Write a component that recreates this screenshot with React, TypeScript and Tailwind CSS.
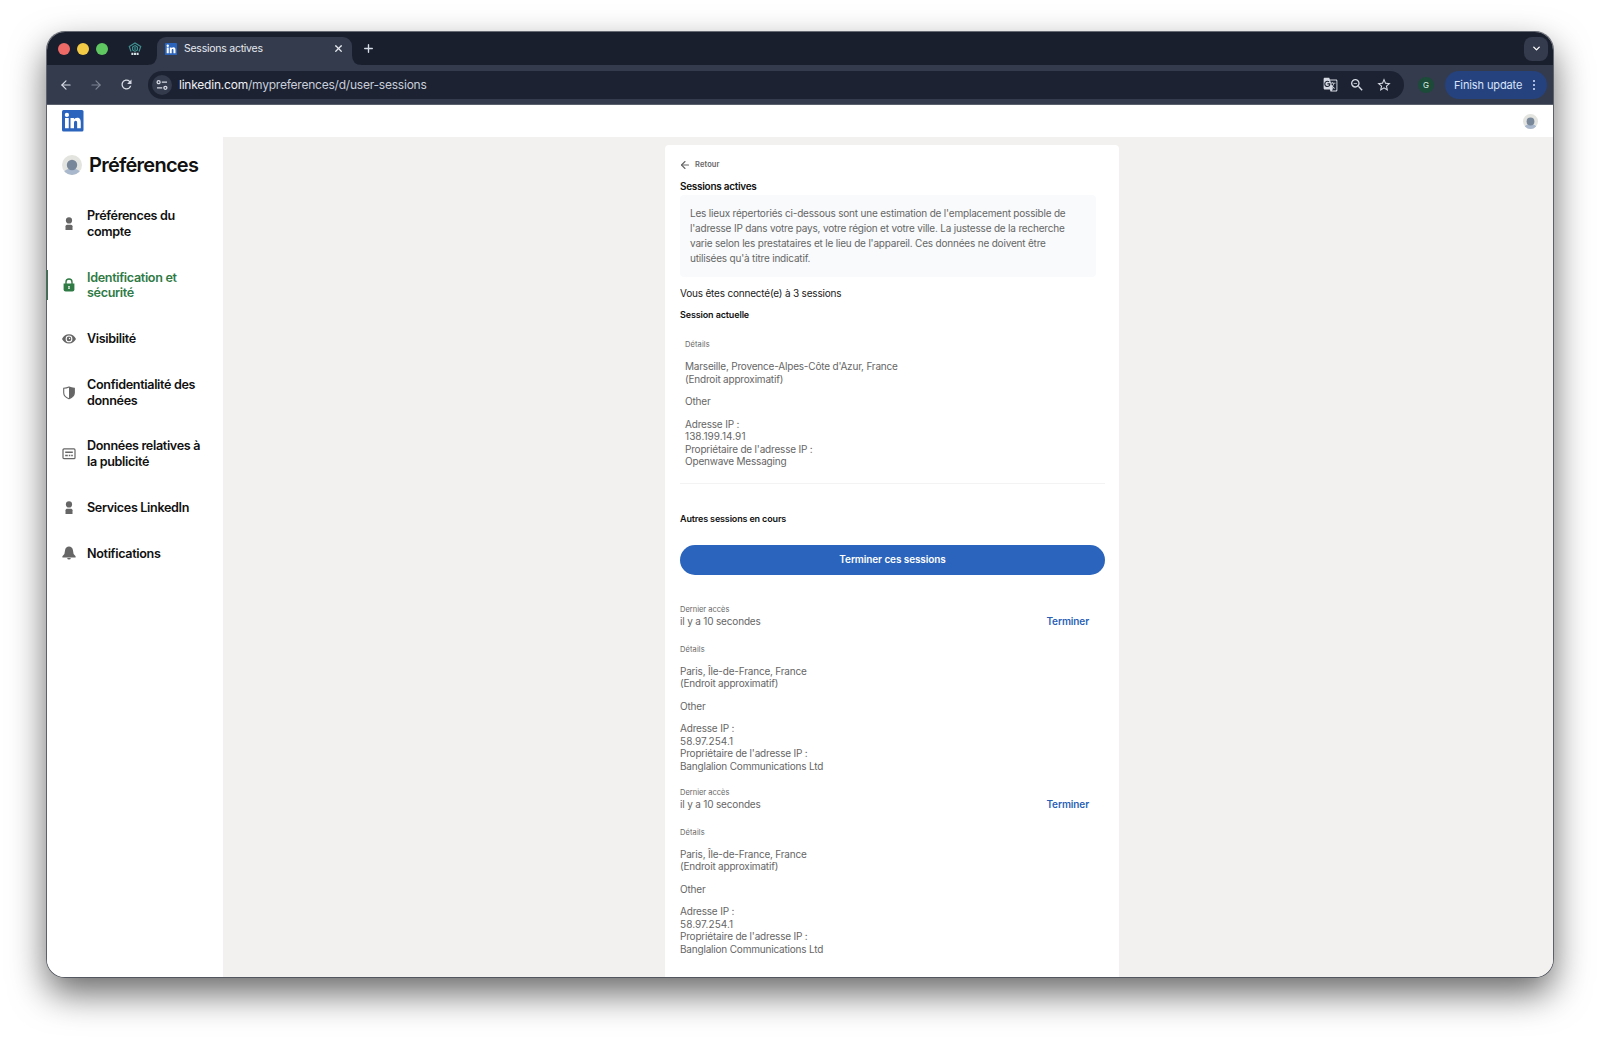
import type { ReactNode } from 'react';
import { ArrowLeft, ArrowRight, ChevronDown, Plus, X } from 'lucide-react';
import { MdGTranslate, MdOutlineStarBorder, MdOutlineZoomOut, MdRefresh } from 'react-icons/md';

const otherSessions = [
  { id: 1, access: 'il y a 10 secondes', city: 'Paris, Île-de-France, France', ip: '58.97.254.1', owner: 'Banglalion Communications Ltd' },
  { id: 2, access: 'il y a 10 secondes', city: 'Paris, Île-de-France, France', ip: '58.97.254.1', owner: 'Banglalion Communications Ltd' },
];

function LinkedinLogo({ className }: { className: string }) {
  return (
    <svg viewBox="0 0 22 22" className={className}>
      <rect width="22" height="22" rx="1.6" fill="#2a64bc" />
      <circle cx="5" cy="5" r="2.2" fill="#fff" />
      <path d="M3.1 8.2h3.8v10.6H3.1zM8.7 8.2h3.5v1.5c.6-1 1.7-1.8 3.3-1.8 2.9 0 3.7 2 3.7 4.8v6.1h-3.7v-5.4c0-1.3-.1-2.5-1.5-2.5s-1.7 1.2-1.7 2.5v5.4H8.7z" fill="#fff" />
    </svg>
  );
}

function Avatar({ className }: { className: string }) {
  return (
    <svg viewBox="0 0 20 20" className={className}>
      <clipPath id="round"><circle cx="10" cy="10" r="10" /></clipPath>
      <g clipPath="url(#round)">
        <rect width="20" height="20" fill="#e3e3df" />
        <ellipse cx="10" cy="18.5" rx="8.6" ry="5" fill="#a9b8cc" />
        <circle cx="10" cy="10" r="5.2" fill="#788799" />
      </g>
    </svg>
  );
}

function PersonIcon() {
  return (
    <svg viewBox="0 0 14 14" className="h-3.5 w-3.5" fill="currentColor">
      <circle cx="7" cy="3.4" r="3.1" />
      <path d="M5 7.8h4a1.5 1.5 0 0 1 1.5 1.5V13h-7V9.3A1.5 1.5 0 0 1 5 7.8z" />
    </svg>
  );
}

function LockIcon() {
  return (
    <svg viewBox="0 0 14 14" className="h-3.5 w-3.5">
      <path d="M4 6.5V4a3 3 0 0 1 6 0v2.5" fill="none" stroke="currentColor" strokeWidth="1.4" />
      <path d="M1.6 5.5h10.8v6a2 2 0 0 1-2 2H3.6a2 2 0 0 1-2-2z" fill="currentColor" />
      <path d="M6.2 7.9h1.6l-.3 1.5.3 1.7H6.2l.3-1.7z" fill="#fff" />
    </svg>
  );
}

function EyeIcon() {
  return (
    <svg viewBox="0 0 14 14" className="h-3.5 w-3.5">
      <path d="M7 2.2c3.2 0 5.6 2 7 4.7-1.4 2.7-3.8 4.7-7 4.7S1.4 9.6 0 6.9c1.4-2.7 3.8-4.7 7-4.7z" fill="currentColor" />
      <circle cx="7" cy="6.9" r="3.4" fill="#fff" />
      <circle cx="7" cy="6.9" r="2.3" fill="currentColor" />
      <circle cx="7.5" cy="6.5" r=".7" fill="#fff" />
    </svg>
  );
}

function ShieldIcon() {
  return (
    <svg viewBox="0 0 14 14" className="h-3.5 w-3.5">
      <path d="M7 1c1.6.8 3.2 1.2 5.3 1.2v4.6c0 2.8-2 4.8-5.3 6-3.3-1.2-5.3-3.2-5.3-6V2.2C3.8 2.2 5.4 1.8 7 1z" fill="none" stroke="currentColor" strokeWidth="1.1" />
      <path d="M7 1c1.6.8 3.2 1.2 5.3 1.2v4.6c0 2.8-2 4.8-5.3 6z" fill="currentColor" />
    </svg>
  );
}

function AdIcon() {
  return (
    <svg viewBox="0 0 14 14" className="h-3.5 w-3.5">
      <rect x="1" y="1.9" width="12" height="9.8" rx="1" fill="none" stroke="currentColor" strokeWidth="1.2" />
      <path d="M3.2 5.2h7.6M3.2 8.4h2.6M6.8 8.4h1.5M9.2 8.4h1.6" stroke="currentColor" strokeWidth="1.5" />
    </svg>
  );
}

function BellIcon() {
  return (
    <svg viewBox="0 0 14 14" className="h-3.5 w-3.5" fill="currentColor">
      <path d="M.4 10.3 2.4 8l.7-4C3.4 2 5 .6 7 .6S10.6 2 10.9 4l.7 4 2 2.3v1.2H.4zM5.2 11.9h3.6a1.8 1.5 0 0 1-3.6 0z" />
    </svg>
  );
}

const menu: { label: string; icon: ReactNode; active?: boolean }[] = [
  { label: 'Préférences du compte', icon: <PersonIcon /> },
  { label: 'Identification et sécurité', icon: <LockIcon />, active: true },
  { label: 'Visibilité', icon: <EyeIcon /> },
  { label: 'Confidentialité des données', icon: <ShieldIcon /> },
  { label: 'Données relatives à la publicité', icon: <AdIcon /> },
  { label: 'Services LinkedIn', icon: <PersonIcon /> },
  { label: 'Notifications', icon: <BellIcon /> },
];

function TabStrip() {
  return (
    <div className="flex h-[33px] items-end bg-[#1a1f2e]">
      <div className="flex h-[33px] w-[100px] items-center pl-[11px]">
        <span className="mr-[7px] h-3 w-3 rounded-full bg-[#ed6a66]" />
        <span className="mr-[7px] h-3 w-3 rounded-full bg-[#f4cb45]" />
        <span className="h-3 w-3 rounded-full bg-[#5fc860]" />
        <svg viewBox="0 0 14 14" className="ml-[20px] h-[14px] w-[14px]" fill="none" stroke="#3f9090" strokeWidth="1.2">
          <path d="M3 9.5 1.3 4.6 7 1l5.7 3.6L11 9.5" />
          <path d="M7 3.6 9.4 5v3L7 9.4 4.6 8V5z" />
          <path d="M7 5v3" />
          <path d="M3.4 11.8h7.2" stroke="#d5e4e6" strokeWidth="2.2" strokeDasharray="2 .6" />
        </svg>
      </div>
      <svg viewBox="0 0 10 10" className="h-[10px] w-[10px]"><path d="M0 10Q10 10 10 0V10z" fill="#343b4c" /></svg>
      <div className="flex h-[28px] w-[195px] items-center rounded-t-[9px] bg-[#343b4c] pl-2 pr-[8px] pb-[5px]">
        <LinkedinLogo className="h-3 w-3" />
        <span className="ml-[7px] flex-1 text-[10.5px] tracking-[-0.25px] text-[#e6e9f0]">Sessions actives</span>
        <X className="h-[11px] w-[11px] text-[#e6e9f0]" strokeWidth={2.8} />
      </div>
      <svg viewBox="0 0 10 10" className="h-[10px] w-[10px]"><path d="M10 10Q0 10 0 0V10z" fill="#343b4c" /></svg>
      <div className="flex h-[33px] flex-1 items-center justify-between pr-[5px]">
        <Plus className="h-[13px] w-[13px] text-[#d8dce6]" strokeWidth={2.5} />
        <span className="flex h-6 w-6 items-center justify-center rounded-lg bg-[#343b4c]">
          <ChevronDown className="h-[11px] w-[11px] text-white" strokeWidth={3} />
        </span>
      </div>
    </div>
  );
}

function Toolbar() {
  return (
    <div className="flex h-[40px] shrink-0 items-center border-b border-[#5a606c] bg-[#343b4c] text-[#d5d9e3]">
      <ArrowLeft className="ml-[12px] h-[14px] w-[14px]" />
      <ArrowRight className="ml-4 h-[14px] w-[14px] text-[#7d8493]" />
      <MdRefresh className="ml-4 h-[15px] w-[15px]" />
      <div className="ml-[14px] flex h-7 w-[1256px] items-center rounded-full bg-[#1c2231] pl-1">
        <span className="flex h-5 w-5 items-center justify-center rounded-full bg-[#343b4c]">
          <svg viewBox="0 0 12 12" className="h-3 w-3" fill="none" stroke="currentColor" strokeWidth="1.3">
            <circle cx="2.6" cy="3.2" r="1.5" />
            <path d="M5.8 3.2H11M1 8.8h5.2" />
            <circle cx="9.4" cy="8.8" r="1.5" />
          </svg>
        </span>
        <span className="ml-[7px] flex-1 text-[12px] tracking-[-0.22px] text-[#c9cedb]">
          <span className="text-[#eef0f6]">linkedin.com</span>/mypreferences/d/user-sessions
        </span>
        <MdGTranslate className="h-[15px] w-[15px]" />
        <MdOutlineZoomOut className="ml-[11px] h-4 w-4" />
        <MdOutlineStarBorder className="ml-[11px] mr-[12px] h-4 w-4" />
      </div>
      <span className="ml-[14px] flex h-4 w-4 items-center justify-center rounded-full bg-[#1c4b3a] text-[8px] text-[#dcefe4]">G</span>
      <div className="ml-[11px] flex h-7 w-[102px] items-center rounded-full bg-[#25427f] text-[11px] tracking-[-0.12px] text-[#d9e4fb]">
        <span className="ml-[9px] flex-1 whitespace-nowrap pt-px">Finish update</span>
        <span className="mr-[12px] flex flex-col gap-[2px]">
          <i className="h-[2px] w-[2px] rounded-full bg-[#d9e4fb]" />
          <i className="h-[2px] w-[2px] rounded-full bg-[#d9e4fb]" />
          <i className="h-[2px] w-[2px] rounded-full bg-[#d9e4fb]" />
        </span>
      </div>
    </div>
  );
}

function Sidebar() {
  return (
    <aside className="w-[176px] shrink-0 bg-white pt-[17px]">
      <div className="mb-[17px] flex h-[22px] items-center pl-[15px]">
        <Avatar className="h-5 w-5" />
        <h1 className="ml-[7px] text-[20px] font-semibold tracking-[-0.75px] text-[#111]">Préférences</h1>
      </div>
      <nav>
        {menu.map((item) => (
          <div key={item.label} className={item.active ? 'relative flex items-center py-[15.05px] text-[#2f7a45]' : 'flex items-center py-[15.05px] text-[#666]'}>
            {item.active && <span className="absolute left-0 h-[30px] w-px bg-[#2f7a45]" />}
            <span className="ml-[15px] mr-[11px]">{item.icon}</span>
            <span className={item.active ? 'w-[118px] text-[12.6px] font-semibold leading-[15.7px] tracking-[-0.34px]' : 'w-[118px] text-[12.6px] font-semibold leading-[15.7px] tracking-[-0.34px] text-[#111]'}>{item.label}</span>
          </div>
        ))}
      </nav>
    </aside>
  );
}

function Details({ city, ip, owner }: { city: string; ip: string; owner: string }) {
  return (
    <div className="text-[10px] leading-[12.5px] tracking-[-0.19px] text-[#666]">
      <p className="text-[7.5px] leading-[10px] tracking-[0.1px]">Détails</p>
      <p className="mt-[10px]">{city}<br />(Endroit approximatif)</p>
      <p className="mt-[10px]">Other</p>
      <p className="mt-[10px]">
        Adresse IP :<br />
        <span className="tracking-[0.06px]">{ip}</span><br />
        Propriétaire de l'adresse IP :<br />
        {owner}
      </p>
    </div>
  );
}

export default function App() {
  return (
    <div className="h-[1039px] w-[1600px] overflow-hidden bg-white pl-[47px] pt-[32px] font-['Inter',sans-serif]">
      <div className="flex h-[945px] w-[1506px] flex-col overflow-hidden rounded-[18px] bg-white shadow-[0_0_0_1px_rgba(70,75,85,0.8),0_16px_36px_rgba(0,0,0,0.6)]">
        <TabStrip />
        <Toolbar />
        <header className="flex h-[32px] shrink-0 items-center justify-between bg-white px-[15px]">
          <LinkedinLogo className="h-[21.5px] w-[21.5px]" />
          <Avatar className="h-[15px] w-[15px]" />
        </header>
        <div className="flex min-h-0 flex-1">
          <Sidebar />
          <main className="flex flex-1 justify-center overflow-hidden bg-[#f2f1ef] pt-2 pl-2">
            <section className="h-[860px] w-[454px] shrink-0 rounded-[4px] bg-white pl-[15px] pr-[14px] pt-[14px]">
              <div className="flex h-[11px] items-center text-[#666]">
                <ArrowLeft className="-ml-px h-3 w-3" strokeWidth={2.2} />
                <span className="ml-[4px] text-[7.5px] font-semibold tracking-[0.12px]">Retour</span>
              </div>
              <h2 className="mt-[9px] text-[10px] font-semibold leading-[14px] tracking-[-0.28px] text-[#111]">Sessions actives</h2>
              <p className="mt-[2px] h-[82px] w-[416px] rounded-[4px] bg-[#f8fafb] pl-[10px] pt-[11px] text-[10px] leading-[15px] tracking-[-0.19px] text-[#666]">
                Les lieux répertoriés ci-dessous sont une estimation de l'emplacement possible de<br />
                l'adresse IP dans votre pays, votre région et votre ville. La justesse de la recherche<br />
                varie selon les prestataires et le lieu de l'appareil. Ces données ne doivent être<br />
                utilisées qu'à titre indicatif.
              </p>
              <p className="mt-[9px] text-[10px] leading-[14px] tracking-[-0.19px] text-[#191919]">Vous êtes connecté(e) à 3 sessions</p>
              <h3 className="mt-[9px] text-[9px] font-semibold leading-[12px] tracking-[-0.13px] text-[#111]">Session actuelle</h3>
              <div className="mt-[19px] pl-[5px]">
                <Details city="Marseille, Provence-Alpes-Côte d'Azur, France" ip="138.199.14.91" owner="Openwave Messaging" />
              </div>
              <hr className="mt-[15px] border-[#f3f3f3]" />
              <h3 className="mt-[29px] text-[9px] font-semibold leading-[12px] tracking-[-0.15px] text-[#111]">Autres sessions en cours</h3>
              <button className="mt-[20px] h-[30px] w-[425px] rounded-full bg-[#2a64bc] text-[10px] font-semibold tracking-[-0.1px] text-white">Terminer ces sessions</button>
              <div className="mt-[30px]">
                {otherSessions.map((s) => (
                  <div key={s.id} className="h-[183px]">
                    <div className="mb-[17px] flex items-end justify-between pr-[16px]">
                      <div className="text-[#666]">
                        <p className="text-[7.5px] leading-[10px]">Dernier accès</p>
                        <p className="text-[10px] leading-[13px] tracking-[-0.17px]">{s.access}</p>
                      </div>
                      <a className="text-[10px] font-semibold leading-[14px] tracking-[-0.1px] text-[#2a5fb5]">Terminer</a>
                    </div>
                    <Details city={s.city} ip={s.ip} owner={s.owner} />
                  </div>
                ))}
              </div>
            </section>
          </main>
        </div>
      </div>
    </div>
  );
}
